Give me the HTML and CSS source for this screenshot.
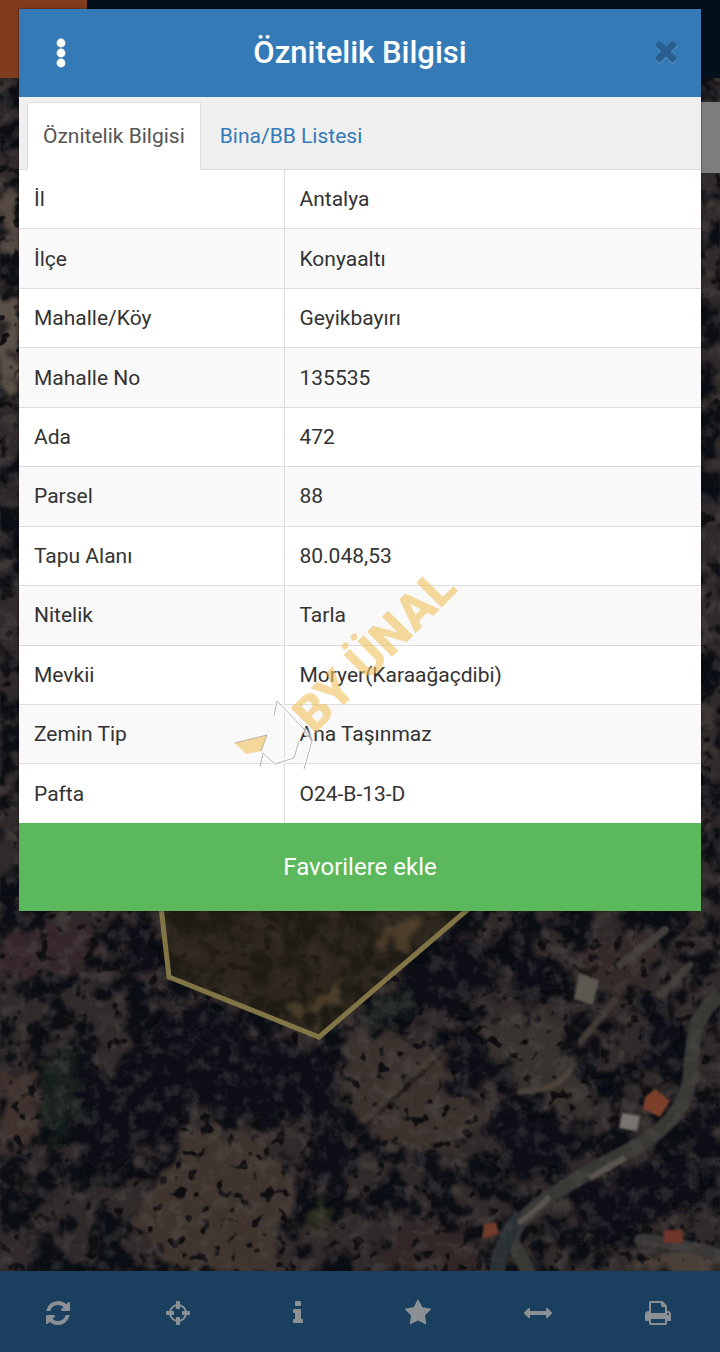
FILE: index.html
```html
<!DOCTYPE html>
<html lang="tr">
<head>
    <meta charset="UTF-8">
    <meta name="viewport" content="width=device-width, initial-scale=1.0">
    <title>Öznitelik Bilgisi</title>
    <link rel="stylesheet" href="styles.css">
</head>
<body>

<!-- map behind the dialog -->
<div class="map">
    <svg class="map-canvas" viewBox="0 0 720 1352" preserveAspectRatio="xMidYMid slice" aria-hidden="true">
        <defs>
            <filter id="trees" x="0" y="0" width="100%" height="100%" color-interpolation-filters="sRGB">
                <feTurbulence type="fractalNoise" baseFrequency="0.032" numOctaves="4" seed="8"/>
                <feColorMatrix values="0 0 0 0 0.04  0 0 0 0 0.05  0 0 0 0 0.075  7 0 0 0 -3.1"/>
                <feGaussianBlur stdDeviation="0.8"/>
            </filter>
            <filter id="shrubs" x="0" y="0" width="100%" height="100%" color-interpolation-filters="sRGB">
                <feTurbulence type="fractalNoise" baseFrequency="0.08" numOctaves="2" seed="21"/>
                <feColorMatrix values="0 0 0 0 0.06  0 0 0 0 0.06  0 0 0 0 0.07  0 9 0 0 -5.4"/>
                <feGaussianBlur stdDeviation="0.6"/>
            </filter>
            <filter id="grain" x="0" y="0" width="100%" height="100%" color-interpolation-filters="sRGB">
                <feTurbulence type="fractalNoise" baseFrequency="0.07" numOctaves="4" seed="4"/>
                <feColorMatrix values="0 0 0 0 0.34  0 0 0 0 0.32  0 0 0 0 0.31  0 0 4 0 -1.9"/>
                <feGaussianBlur stdDeviation="0.7"/>
            </filter>
            <filter id="rough" x="-10%" y="-10%" width="120%" height="120%">
                <feTurbulence type="fractalNoise" baseFrequency="0.05" numOctaves="4" seed="3" result="n"/>
                <feDisplacementMap in="SourceGraphic" in2="n" scale="46" xChannelSelector="R" yChannelSelector="G"/>
                <feGaussianBlur stdDeviation="2"/>
            </filter>
            <filter id="soft"><feGaussianBlur stdDeviation="1"/></filter>
        </defs>
        <rect width="720" height="1352" fill="#312a2a"/>
        <rect width="720" height="1352" filter="url(#trees)"/>

        <!-- soil and clearings -->
        <g filter="url(#rough)">
            <path d="M0 945 50 925 90 925 100 950 60 970 0 980Z" fill="#34282a"/>
            <path d="M0 1070H36V1140L0 1155Z" fill="#40302f"/>
            <path d="M190 1130 265 1135 290 1190 270 1271H170L130 1221Z" fill="#40342f"/>
            <path d="M345 1035 390 1025 445 1055 490 1125 440 1150 400 1145 355 1120Z" fill="#3b302f"/>
            <path d="M480 1020 550 1005 570 1060 600 1110 570 1115 530 1090 500 1080Z" fill="#38302e"/>
            <path d="M590 940 640 925 660 960 620 1000 570 980Z" fill="#342b2a"/>
            <path d="M400 1230 460 1220 480 1271H380Z" fill="#302828"/>
            <path d="M640 1255 720 1250V1271H640Z" fill="#4b4137"/>
            <path d="M0 180 19 200V250L0 230Z" fill="#554a42"/>
            <path d="M0 290 19 300V380H0Z" fill="#5c5146"/>
        </g>
        <rect width="720" height="1352" filter="url(#shrubs)"/>

        <!-- woods -->
        <g fill="#0b1018" filter="url(#rough)">
            <path d="M80 1075 130 1060 165 1010 215 1000 250 1035 320 1050 340 1090 340 1120 270 1120 190 1110 150 1150 90 1170 60 1140Z"/>
            <path d="M380 1000 440 950 480 940 490 980 460 1010 400 1020Z"/>
            <path d="M500 925 525 930 560 980 545 1000 515 990Z"/>
            <path d="M445 1040 475 1035 500 1060 520 1080 490 1090 450 1080Z"/>
            <path d="M500 1100 540 1120 580 1125 580 1155 520 1180 490 1150Z"/>
            <path d="M570 1185 640 1170 680 1150 705 1200 640 1225 590 1250Z"/>
            <path d="M410 1150 430 1150 460 1180 440 1190Z"/>
            <path d="M645 1020 680 1020 680 1070 640 1065Z"/>
            <path d="M585 1035 605 1030 600 1090 585 1085Z"/>
            <path d="M310 1130 340 1120 355 1170 340 1200 315 1180Z"/>
            <path d="M115 925 155 920 155 970 125 970Z"/>
            <path d="M0 900H40L25 925 0 935Z"/>
            <path d="M690 1110 720 1100V1170L700 1180Z"/>
        </g>
        <g fill="#15231f" opacity=".7" filter="url(#rough)">
            <path d="M40 1060 75 1050 80 1130 45 1150Z"/>
            <path d="M360 1010 400 990 410 1015 365 1025Z"/>
            <path d="M315 1200 335 1190 328 1230 315 1230Z" fill="#303420"/>
        </g>

        <!-- roads -->
        <g fill="none" stroke-linecap="round" filter="url(#soft)">
            <path d="M364 1120 442 1047" stroke="#423a35" stroke-width="6" opacity=".7"/>
            <path d="M364 1127 442 1055" stroke="#1b1717" stroke-width="2"/>
            <path d="M620 965 665 930" stroke="#423d3b" stroke-width="8"/>
            <path d="M660 995 690 965" stroke="#403a39" stroke-width="7"/>
            <path d="M582 1040 615 1000" stroke="#403836" stroke-width="7"/>
            <path d="M520 1092Q560 1090 570 1070" stroke="#53493e" stroke-width="6" opacity=".8"/>
            <path d="M720 995C688 1020 694 1050 690 1078S668 1130 630 1150 545 1195 522 1220 524 1250 528 1275" stroke="#393736" stroke-width="15" stroke-linecap="butt"/>
            <path d="M521 1215Q500 1240 497 1275" stroke="#2c3134" stroke-width="15" stroke-linecap="butt"/>
            <path d="M590 1178 625 1158" stroke="#5c564f" stroke-width="6" stroke-linecap="butt"/>
            <path d="M520 1222Q540 1207 548 1198" stroke="#5c554d" stroke-width="5"/>
            <path d="M640 1240Q680 1242 720 1256" stroke="#3a3838" stroke-width="12"/>
        </g>
        <rect width="720" height="1352" filter="url(#grain)" opacity=".35"/>

        <!-- buildings -->
        <g filter="url(#soft)">
            <path d="M579 974 599 980 593 1005 574 999Z" fill="#5d5850"/>
            <path d="M578 970 589 973 598 967" stroke="#15120f" stroke-width="4" fill="none"/>
            <path d="M645 1097 655 1089 670 1101 660 1117 643 1109Z" fill="#7b402a"/>
            <path d="M622 1113 640 1116 637 1131 619 1128Z" fill="#77736e"/>
            <path d="M484 1224 496 1222 499 1234 482 1239Z" fill="#703a2b"/>
            <path d="M664 1230H683V1243H664Z" fill="#70362a"/>
        </g>

        <!-- selected parcel -->
        <path d="M158 880 169 977 319 1037 502 880Z" fill="#2c2515" fill-opacity=".6"/>
        <path d="M290 1018 305 1000 340 978 338 1005 317 1022Z M375 940 415 915 435 913 395 950Z" fill="#5c4a33" opacity=".7" filter="url(#rough)"/>
        <path d="M158 880 169 977 319 1037 502 880" fill="none" stroke="#817546" stroke-width="5"/>
    </svg>
    <div class="map-header"><span class="map-brand"></span></div>
    <div class="map-control"></div>
</div>

<main class="page">
    <section class="dialog" role="dialog" aria-labelledby="dialog-title">
        <header class="dialog-header">
            <button class="menu-btn" type="button" aria-label="Menü">
                <svg width="10" height="30" viewBox="0 0 10 30" fill="currentColor"><circle cx="5" cy="5" r="4.4"/><circle cx="5" cy="15" r="4.4"/><circle cx="5" cy="25" r="4.4"/></svg>
            </button>
            <h1 class="dialog-title" id="dialog-title">Öznitelik Bilgisi</h1>
            <button class="close-btn" type="button" aria-label="Kapat">
                <svg class="close-icon" viewBox="0 132 1792 1792" fill="currentColor"><path d="M1490 1322q0 40-28 68l-136 136q-28 28-68 28t-68-28l-294-294-294 294q-28 28-68 28t-68-28l-136-136q-28-28-28-68t28-68l294-294-294-294q-28-28-28-68t28-68l136-136q28-28 68-28t68 28l294 294 294-294q28-28 68-28t68 28l136 136q28 28 28 68t-28 68l-294 294 294 294q28 28 28 68z"/></svg>
            </button>
        </header>

        <nav class="tabs">
            <a class="tab active" href="#oznitelik">Öznitelik Bilgisi</a>
            <a class="tab" href="#bina">Bina/BB Listesi</a>
        </nav>

        <table class="info" id="oznitelik">
            <tbody>
                <tr><th scope="row">İl</th><td>Antalya</td></tr>
                <tr><th scope="row">İlçe</th><td>Konyaaltı</td></tr>
                <tr><th scope="row">Mahalle/Köy</th><td>Geyikbayırı</td></tr>
                <tr><th scope="row">Mahalle No</th><td>135535</td></tr>
                <tr><th scope="row">Ada</th><td>472</td></tr>
                <tr><th scope="row">Parsel</th><td>88</td></tr>
                <tr><th scope="row">Tapu Alanı</th><td>80.048,53</td></tr>
                <tr><th scope="row">Nitelik</th><td>Tarla</td></tr>
                <tr><th scope="row">Mevkii</th><td>Moryer(Karaağaçdibi)</td></tr>
                <tr><th scope="row">Zemin Tip</th><td>Ana Taşınmaz</td></tr>
                <tr><th scope="row">Pafta</th><td>O24-B-13-D</td></tr>
            </tbody>
        </table>

        <button class="favorite-btn" type="button">Favorilere ekle</button>

        <!-- watermark -->
        <svg class="watermark" width="280" height="260" viewBox="230 540 280 260">
            <path d="M277 701 303 728 312 741 304 769M277 701 274 716M263 753 275 764 294 758 301 741" fill="none" stroke="#fff" stroke-opacity=".6" stroke-width="5"/>
            <path d="M274 716 277 701 303 728 312 741 304 769M260 767 263 753 275 764 294 758 299 741" fill="none" stroke="#b5b5b5" stroke-width="1"/>
            <path d="M235 743 267 735 261 751 246 754Z" fill="#eebf5b" fill-opacity=".6"/>
            <path d="M235 743 267 735 261 751" fill="none" stroke="#b9b2a4"/>
            <text class="watermark-text" transform="translate(314 735) rotate(-45)">BY ÜNAL</text>
        </svg>
    </section>
</main>

<footer class="toolbar">
    <button class="tool" type="button" aria-label="Yenile">
        <svg class="tool-icon" viewBox="0 0 1792 1792"><path d="M1639 1056q0 5-1 7-64 268-268 434.5t-478 166.5q-146 0-282.5-55t-243.5-157l-129 129q-19 19-45 19t-45-19-19-45v-448q0-26 19-45t45-19h448q26 0 45 19t19 45-19 45l-137 137q71 66 161 102t187 36q134 0 250-65t186-179q11-17 53-117 8-23 30-23h192q13 0 22.5 9.5t9.5 22.5zm25-800v448q0 26-19 45t-45 19h-448q-26 0-45-19t-19-45 19-45l138-138q-148-137-349-137-134 0-250 65t-186 179q-11 17-53 117-8 23-30 23h-199q-13 0-22.5-9.5t-9.5-22.5v-7q65-268 270-434.5t480-166.5q146 0 284 55.5t245 156.5l130-129q19-19 45-19t45 19 19 45z"/></svg>
    </button>
    <button class="tool" type="button" aria-label="Konum">
        <svg class="tool-icon" viewBox="0 0 1792 1792"><path d="M1325 1024h-109q-26 0-45-19t-19-45v-128q0-26 19-45t45-19h109q-32-108-112.5-188.5t-188.5-112.5v109q0 26-19 45t-45 19h-128q-26 0-45-19t-19-45v-109q-108 32-188.5 112.5t-112.5 188.5h109q26 0 45 19t19 45v128q0 26-19 45t-45 19h-109q32 108 112.5 188.5t188.5 112.5v-109q0-26 19-45t45-19h128q26 0 45 19t19 45v109q108-32 188.5-112.5t112.5-188.5zm339-192v128q0 26-19 45t-45 19h-143q-37 161-154.5 278.5t-278.5 154.5v143q0 26-19 45t-45 19h-128q-26 0-45-19t-19-45v-143q-161-37-278.5-154.5t-154.5-278.5h-143q-26 0-45-19t-19-45v-128q0-26 19-45t45-19h143q37-161 154.5-278.5t278.5-154.5v-143q0-26 19-45t45-19h128q26 0 45 19t19 45v143q161 37 278.5 154.5t154.5 278.5h143q26 0 45 19t19 45z"/></svg>
    </button>
    <button class="tool" type="button" aria-label="Bilgi">
        <svg class="tool-icon" viewBox="0 0 1792 1792"><path d="M1216 1344v128q0 26-19 45t-45 19h-512q-26 0-45-19t-19-45v-128q0-26 19-45t45-19h64v-384h-64q-26 0-45-19t-19-45v-128q0-26 19-45t45-19h384q26 0 45 19t19 45v576h64q26 0 45 19t19 45zm-128-1152v192q0 26-19 45t-45 19h-256q-26 0-45-19t-19-45v-192q0-26 19-45t45-19h256q26 0 45 19t19 45z"/></svg>
    </button>
    <button class="tool" type="button" aria-label="Favoriler">
        <svg class="tool-icon" viewBox="0 0 1792 1792"><path d="M1728 647q0 22-26 48l-363 354 86 500q1 7 1 20 0 21-10.5 35.5t-30.5 14.5q-19 0-40-12l-449-236-449 236q-22 12-40 12-21 0-31.5-14.5t-10.5-35.5q0-6 2-20l86-500-364-354q-25-27-25-48 0-37 56-46l502-73 225-455q19-41 49-41t49 41l225 455 502 73q56 9 56 46z"/></svg>
    </button>
    <button class="tool" type="button" aria-label="Ölçüm">
        <svg class="tool-icon" viewBox="0 0 1792 1792"><path d="M1792 896q0 26-19 45l-256 256q-19 19-45 19t-45-19-19-45v-128h-1024v128q0 26-19 45t-45 19-45-19l-256-256q-19-19-19-45t19-45l256-256q19-19 45-19t45 19 19 45v128h1024v-128q0-26 19-45t45-19 45 19l256 256q19 19 19 45z"/></svg>
    </button>
    <button class="tool" type="button" aria-label="Yazdır">
        <svg class="tool-icon" viewBox="0 0 1792 1792"><path d="M448 1536h896v-256h-896v256zm0-640h896v-384h-160q-40 0-68-28t-28-68v-160h-640v640zm1152 64q0-26-19-45t-45-19-45 19-19 45 19 45 45 19 45-19 19-45zm128 0v416q0 13-9.5 22.5t-22.5 9.5h-224v160q0 40-28 68t-68 28h-960q-40 0-68-28t-28-68v-160h-224q-13 0-22.5-9.5t-9.5-22.5v-416q0-79 56.5-135.5t135.5-56.5h64v-544q0-40 28-68t68-28h672q40 0 88 20t76 48l152 152q28 28 48 76t20 88v256h64q79 0 135.5 56.5t56.5 135.5z"/></svg>
    </button>
</footer>

</body>
</html>
```
FILE: styles.css
```css
* {
    box-sizing: border-box;
}

body {
    position: relative;
    display: flex;
    flex-direction: column;
    min-height: 100vh;
    margin: 0;
    background: #14161b;
    color: #333;
    font-family: Roboto, Arial, sans-serif;
    font-size: 21px;
    line-height: 28px;
}

button {
    padding: 0;
    border: none;
    background: none;
    font-family: inherit;
    cursor: pointer;
}

svg {
    display: block;
}

/* map */
.map {
    position: absolute;
    inset: 0;
    overflow: hidden;
}

.map-canvas {
    width: 100%;
    height: 100%;
}

.map-header {
    position: absolute;
    top: 0;
    left: 0;
    right: 0;
    display: flex;
    height: 78px;
    background: #030f1b;
}

.map-brand {
    width: 87px;
    background: #803c1c;
}

.map-control {
    position: absolute;
    top: 102px;
    right: 0;
    width: 70px;
    height: 71px;
    background: #7e7e7e;
}

/* dialog */
.page {
    position: relative;
    flex: 1;
    padding: 9px 19px;
}

.dialog {
    position: relative;
    background: #fff;
    box-shadow: 0 0 2px rgba(0, 0, 0, 0.6);
}

.dialog-header {
    display: flex;
    align-items: center;
    justify-content: space-between;
    height: 88px;
    padding: 0 12px;
    background: #337ab7;
}

.menu-btn,
.close-btn {
    display: flex;
    align-items: center;
    justify-content: center;
    width: 60px;
    height: 46px;
    color: #fff;
}

.close-btn {
    justify-content: flex-end;
    padding-right: 7px;
    color: #295f90;
}

.close-icon {
    width: 32px;
    height: 32px;
    filter: drop-shadow(0 1px 0 rgba(255, 255, 255, 0.25));
}

.dialog-title {
    margin: 0;
    color: #fff;
    font-size: 31px;
    font-weight: 500;
    line-height: 40px;
}

.tabs {
    display: flex;
    gap: 3px;
    padding: 5px 8px 0;
    background: #efefef;
    border-bottom: 1px solid #ddd;
}

.tab {
    margin-bottom: -1px;
    padding: 19px 15px 20px;
    border: 1px solid transparent;
    border-bottom: none;
    color: #337ab7;
    text-decoration: none;
}

.tab.active {
    background: #fff;
    border-color: #ddd;
    color: #555;
}

/* attribute table */
.info {
    width: 100%;
    height: 653px;
    border-collapse: collapse;
    table-layout: fixed;
}

.info th,
.info td {
    padding: 12px 15px;
    border-top: 1px solid #ddd;
    text-align: left;
    font-weight: 400;
}

.info th {
    width: 39%;
    border-right: 1px solid #ddd;
}

.info td {
    padding-left: 14px;
}

.info tr:first-child > * {
    border-top: none;
}

.info tr:nth-child(even) {
    background: #f9f9f9;
}

.favorite-btn {
    display: block;
    width: 100%;
    padding: 28px 20px;
    background: #5cb85c;
    color: #fff;
    font-size: 24px;
    line-height: 32px;
}

.watermark {
    position: absolute;
    top: 531px;
    left: 211px;
    overflow: visible;
    pointer-events: none;
}

.watermark-text {
    fill: #eebf5b;
    fill-opacity: 0.6;
    font-size: 50px;
    font-weight: 900;
}

/* bottom toolbar */
.toolbar {
    position: relative;
    display: flex;
    padding: 28px 0 25px;
    background: #1b3f5f;
}

.tool {
    display: flex;
    flex: 1;
    justify-content: center;
    padding-right: 4px;
}

.tool-icon {
    width: 28px;
    height: 28px;
    fill: #8b9094;
}
```
